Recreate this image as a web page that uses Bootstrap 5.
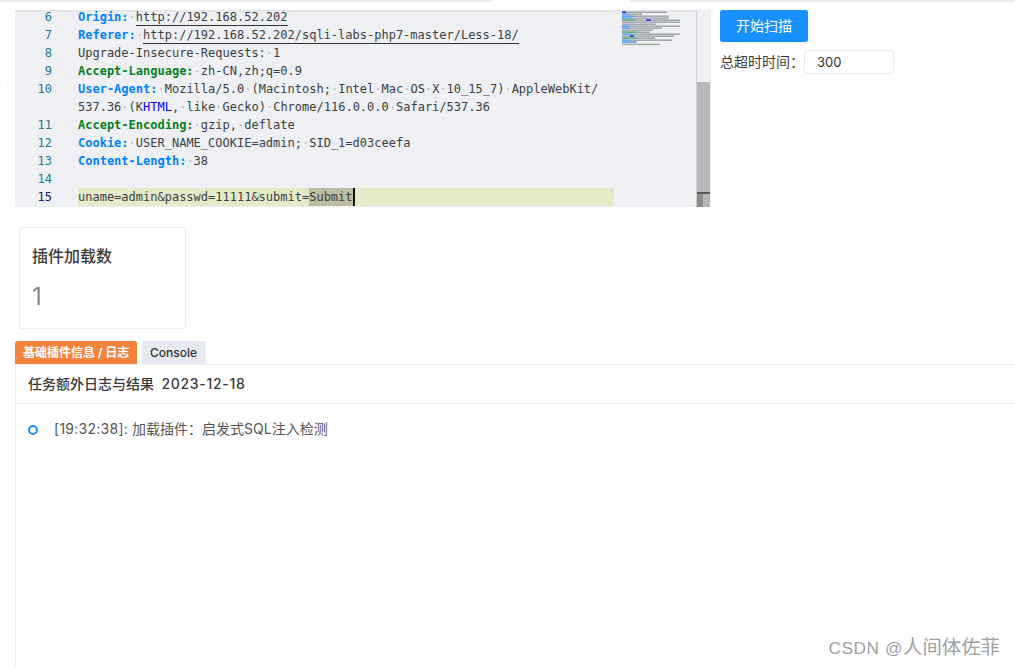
<!DOCTYPE html>
<html lang="zh-CN">
<head>
<meta charset="utf-8">
<title>扫描</title>
<link rel="stylesheet" href="https://cdn.jsdelivr.net/npm/bootstrap@5.3.0/dist/css/bootstrap.min.css">
<style>
html,body{height:667px;overflow:hidden;background:#fff;}
body{font-family:Inter,"Noto Sans CJK SC","Noto Sans",sans-serif;color:#333;position:relative;}
.topline{height:10px;flex:none;}
.topline i{display:block;height:2px;background:#e9e9ec;}
.topline i.seg-a{width:492px;}
.topline i.seg-b{width:385px;}
.edge-tick{position:absolute;left:0;top:82px;width:3px;height:1px;background:#eee;}
.editor{width:696px;height:197px;margin-left:15px;background:#eef0f3;box-shadow:inset 0 3px 3px -2px #ddd;flex:none;font:12px/18px "DejaVu Sans Mono",monospace;color:#3b3f45;overflow:hidden;}
.codepane{width:607px;flex:none;overflow:hidden;}
.codescroll{margin-top:-2px;}
.cl{height:18px;white-space:pre;display:flex;}
.code{flex:1;}
.act .code{background:#e5ebc9;margin-right:8px;}
.num{display:block;flex:none;width:37px;margin-right:26px;text-align:right;color:#237893;}
.act .num{color:#0b216f;}
.hk{color:#0080ff;font-weight:700;}
.hg{color:#067d24;font-weight:700;}
.ws{color:#b9bdc4;}
.ul{border-bottom:1px solid #333;padding-bottom:1px;}
.bl{color:#0000ff;}
.sel{background:#bcbda2;display:inline-block;height:18px;}
.caret-bar{border-right:2px solid #111;}
.mini{width:74px;flex:none;padding:1px 0 0 0;}
.mini svg{display:block;}
.sbar{width:15px;flex:none;background:#eef0f3;border-left:1px solid #cfd1d5;border-right:1px solid #eef0f3;display:flex;flex-direction:column;}
.sb-top{height:72px;flex:none;}
.sb-thumb{height:110px;flex:none;background:#b8b8bc;}
.sb-mark{height:2px;flex:none;background:#555;}
.sb-end{flex:1;background:linear-gradient(90deg,#8c8c8c 45%,#b6b6b9 45%);}
.side{margin-left:9px;}
.btn-scan{--bs-btn-bg:#1890ff;--bs-btn-border-color:#1890ff;--bs-btn-hover-bg:#1890ff;--bs-btn-padding-y:0;--bs-btn-padding-x:0;--bs-btn-font-size:14px;--bs-btn-border-radius:2px;width:88px;height:32px;line-height:30px;box-shadow:0 2px 0 rgba(0,0,0,.04);}
.tlabel{font-size:14px;color:#3c3c3c;width:84px;white-space:nowrap;margin-top:-2px;}
.tinput{width:90px;height:24px;font-size:13px;padding:0 12px;border-radius:4px;border-color:#e8e8f0;color:#333;}
.statbox{width:167px;height:102px;margin:20px 0 0 19px;border:1px solid #ebeef0;border-radius:2px;padding:14px 12px;}
.stat-t{font-size:16px;line-height:28px;font-weight:500;color:#3a3a3a;}
.stat-v{font-size:24px;line-height:30px;margin-top:12px;color:#8a8a8a;}
.tabbar{margin:12px 0 0 15px;gap:5px;height:23px;}
.tabx{font-size:12px;height:23px;line-height:23px;padding:0 8px;border-radius:3px 3px 0 0;font-weight:500;}
.tabx.on{background:#f4843c;color:#fff;font-weight:700;width:122px;white-space:nowrap;}
.tabx.off{background:#e8eaf2;color:#333;width:64px;}
.logbox{margin-left:15px;border-left:1px solid #ebebeb;border-top:1px solid #ebebeb;height:303px;}
.loghead{height:39px;line-height:38px;padding-left:12px;font-size:14px;font-weight:500;color:#3a3a3a;border-bottom:1px solid #ebebeb;white-space:pre;}
.datex{letter-spacing:.7px;}
.logrow{margin:15px 0 0 12px;height:20px;font-size:14px;line-height:20px;color:#555;}
.timex{letter-spacing:.27px;}
.dotx{width:10px;height:10px;border:2px solid #1890ff;border-radius:50%;margin:1px 16px 0 0;flex:none;}
.wm{position:absolute;right:15px;top:634px;font-size:19.4px;line-height:26px;color:#a0a0a0;font-family:"Liberation Sans","Noto Sans CJK SC",sans-serif;white-space:pre;}
.wm-l{font-size:17.2px;letter-spacing:.6px;}
</style>
</head>
<body>
<div class="edge-tick"></div>
<div class="topline d-flex justify-content-between">
  <i class="seg-a"></i><i class="seg-b"></i>
</div>
<div class="d-flex align-items-start">
  <div class="editor d-flex">
    <div class="codepane">
      <div class="codescroll">
        <div class="cl"><span class="num">6</span><span class="code"><span class="hk">Origin:</span><span class="ws">·</span><span class="ul">http://192.168.52.202</span></span></div>
        <div class="cl"><span class="num">7</span><span class="code"><span class="hk">Referer:</span><span class="ws">·</span><span class="ul">http://192.168.52.202/sqli-labs-php7-master/Less-18/</span></span></div>
        <div class="cl"><span class="num">8</span><span class="code">Upgrade-Insecure-Requests:<span class="ws">·</span>1</span></div>
        <div class="cl"><span class="num">9</span><span class="code"><span class="hg">Accept-Language:</span><span class="ws">·</span>zh-CN,zh;q=0.9</span></div>
        <div class="cl"><span class="num">10</span><span class="code"><span class="hk">User-Agent:</span><span class="ws">·</span>Mozilla/5.0<span class="ws">·</span>(Macintosh;<span class="ws">·</span>Intel<span class="ws">·</span>Mac<span class="ws">·</span>OS<span class="ws">·</span>X<span class="ws">·</span>10_15_7)<span class="ws">·</span>AppleWebKit/</span></div>
        <div class="cl"><span class="num"></span><span class="code">537.36<span class="ws">·</span>(K<span class="bl">HTML</span>,<span class="ws">·</span>like<span class="ws">·</span>Gecko)<span class="ws">·</span>Chrome/116.0.0.0<span class="ws">·</span>Safari/537.36</span></div>
        <div class="cl"><span class="num">11</span><span class="code"><span class="hg">Accept-Encoding:</span><span class="ws">·</span>gzip,<span class="ws">·</span>deflate</span></div>
        <div class="cl"><span class="num">12</span><span class="code"><span class="hk">Cookie:</span><span class="ws">·</span>USER_NAME_COOKIE=admin;<span class="ws">·</span>SID_1=d03ceefa</span></div>
        <div class="cl"><span class="num">13</span><span class="code"><span class="hk">Content-Length:</span><span class="ws">·</span>38</span></div>
        <div class="cl"><span class="num">14</span><span class="code"></span></div>
        <div class="cl act"><span class="num">15</span><span class="code">uname=admin&amp;passwd=11111&amp;submit=<span class="sel caret-bar">Submit</span></span></div>
      </div>
    </div>
    <div class="mini">
      <svg width="74" height="36" viewBox="0 0 74 36" aria-hidden="true">
        <g fill="#6f7480" fill-opacity=".65">
          <rect x="0" y="0.5" width="45" height="1.4"/><rect x="0" y="2.5" width="20" height="1.4"/><rect x="0" y="4.5" width="47" height="1.4"/><rect x="0" y="6.5" width="47" height="1.4"/><rect x="0" y="8.5" width="58" height="1.4"/><rect x="0" y="10.5" width="58" height="1.4"/><rect x="0" y="12.5" width="34" height="1.4"/><rect x="0" y="14.5" width="58" height="1.4"/><rect x="0" y="16.5" width="40" height="1.4"/><rect x="0" y="18.5" width="31" height="1.4"/><rect x="0" y="20.5" width="28" height="1.4"/><rect x="0" y="22.5" width="58" height="1.4"/><rect x="0" y="24.5" width="52" height="1.4"/><rect x="0" y="26.5" width="33" height="1.4"/><rect x="0" y="28.5" width="50" height="1.4"/><rect x="0" y="30.5" width="15" height="1.4"/>
        </g>
        <g fill="#5aa5ff">
          <rect x="0" y="2.5" width="6" height="1.4"/><rect x="0" y="4.5" width="12" height="1.4"/><rect x="0" y="6.5" width="10" height="1.4"/><rect x="0" y="14.5" width="7" height="1.4"/><rect x="0" y="16.5" width="8" height="1.4"/><rect x="0" y="22.5" width="11" height="1.4"/><rect x="0" y="28.5" width="7" height="1.4"/><rect x="0" y="30.5" width="14" height="1.4"/>
        </g>
        <g fill="#5cb078">
          <rect x="0" y="8.5" width="13" height="1.4"/><rect x="0" y="20.5" width="15" height="1.4"/><rect x="0" y="26.5" width="15" height="1.4"/>
        </g>
        <g fill="#2020e0">
          <rect x="0" y="0.5" width="4" height="1.4"/><rect x="24" y="8.5" width="5" height="1.4"/><rect x="8" y="24.5" width="4" height="1.4"/>
        </g>
        <rect x="0" y="32.7" width="38" height="1.4" fill="#a8ac9c"/>
      </svg>
    </div>
    <div class="sbar">
      <div class="sb-top"></div><div class="sb-thumb"></div><div class="sb-mark"></div><div class="sb-end"></div>
    </div>
  </div>
  <div class="side">
    <button type="button" class="btn btn-primary btn-scan d-block">开始扫描</button>
    <div class="d-flex align-items-center mt-2">
      <span class="tlabel">总超时时间：</span>
      <input class="form-control tinput" value="300">
    </div>
  </div>
</div>
<div class="statbox">
  <div class="stat-t">插件加载数</div>
  <div class="stat-v">1</div>
</div>
<div class="tabbar d-flex">
  <div class="tabx on">基础插件信息 / 日志</div>
  <div class="tabx off">Console</div>
</div>
<div class="logbox">
  <div class="loghead">任务额外日志与结果  <span class="datex">2023-12-18</span></div>
  <div class="logrow d-flex align-items-center">
    <span class="dotx"></span><span><span class="timex">[19:32:38]:</span> 加载插件：启发式SQL注入检测</span>
  </div>
</div>
<div class="wm"><span class="wm-l">CSDN @</span>人间体佐菲</div>
</body>
</html>
